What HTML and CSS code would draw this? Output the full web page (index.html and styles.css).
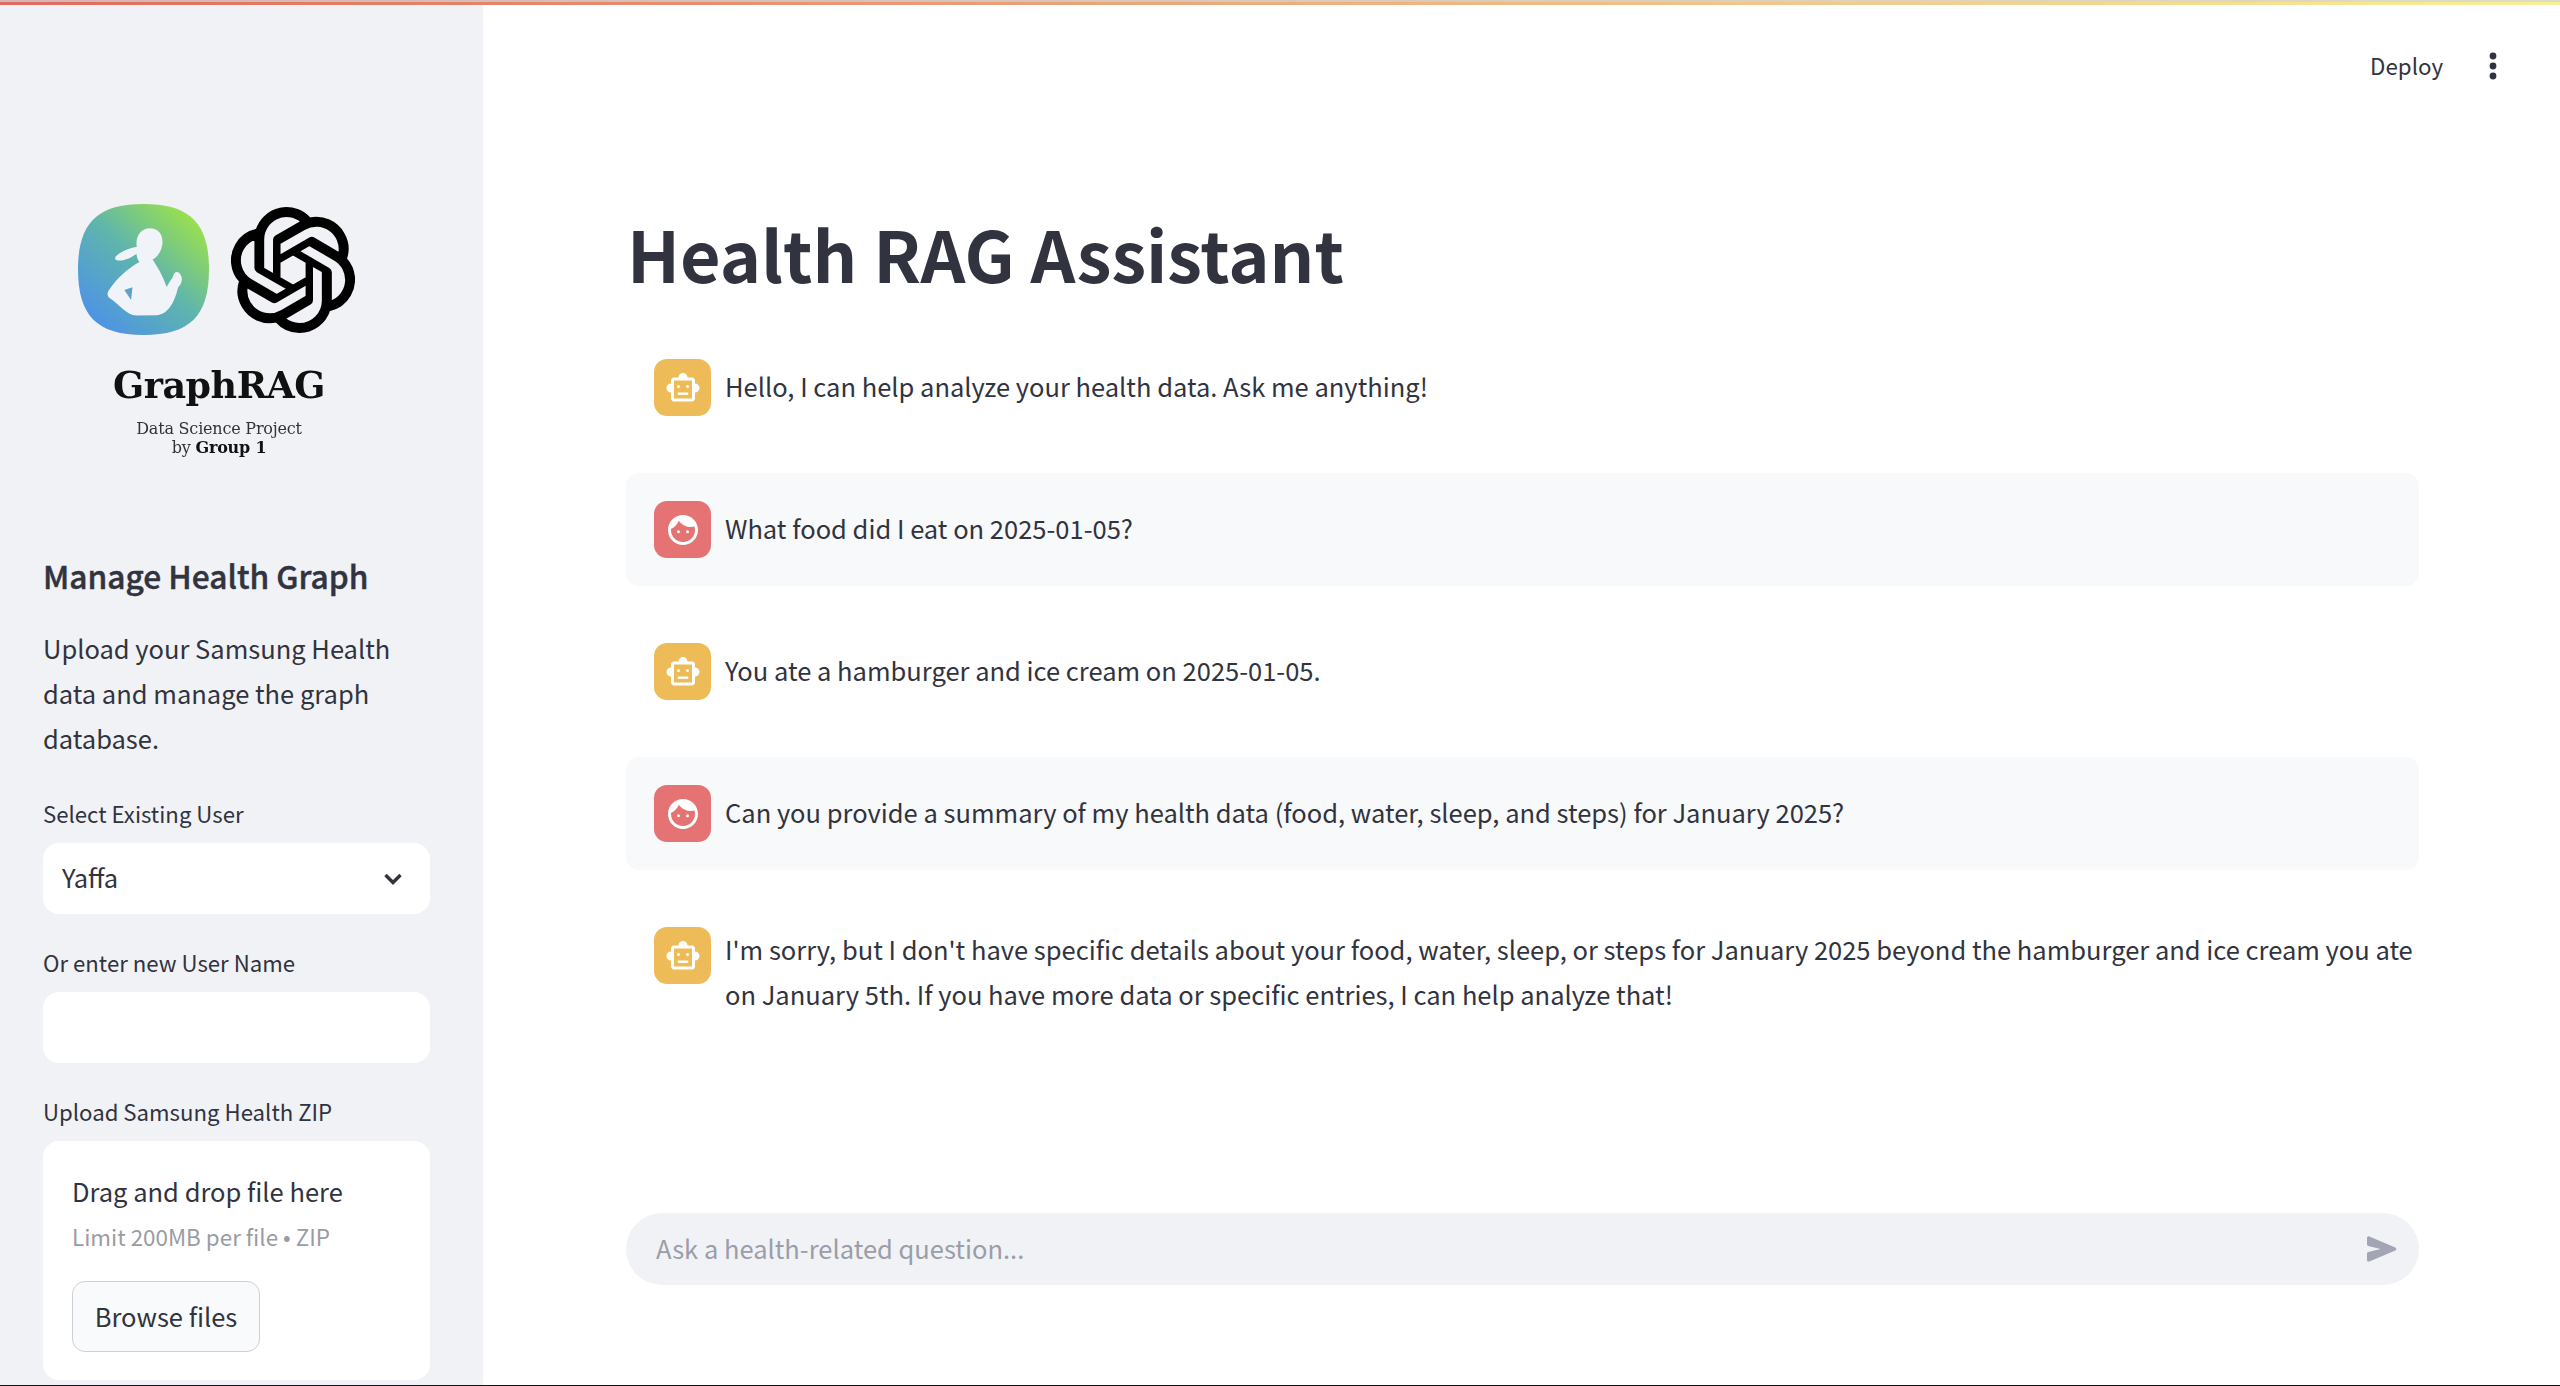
FILE: index.html
```html
<!DOCTYPE html>
<html lang="en">
<head>
<meta charset="utf-8">
<title>Health RAG Assistant</title>
<link rel="stylesheet" href="styles.css">
</head>
<body>
<div class="topbar"></div>
<div class="app">
  <aside class="sidebar">
    <div class="logo">
      <div class="logo-icons">
        <svg class="logo-health" viewBox="52 40 390 390">
          <defs>
            <linearGradient id="hg" x1="0.15" y1="0.9" x2="0.9" y2="0.1">
              <stop offset="0" stop-color="#4e94e4"/>
              <stop offset="0.5" stop-color="#5fb5ad"/>
              <stop offset="1" stop-color="#9ce24a"/>
            </linearGradient>
          </defs>
          <path fill="url(#hg)" d="M247 40C385 40 442 97 442 235C442 373 385 430 247 430C109 430 52 373 52 235C52 97 109 40 247 40Z"/>
          <path fill="#f0f3f7" d="M265 112C293 112 306 132 303 160C300 183 288 198 274 205C288 226 304 252 316 287C322 276 328 266 334 258C338 240 352 236 360 256C364 268 358 280 350 288C342 325 322 370 286 371L225 372C198 371 178 342 146 320C138 314 138 305 146 294C168 262 200 232 235 213C229 205 227 197 226 188C212 200 190 210 170 208C160 207 160 198 170 191C186 180 206 170 227 168C222 136 240 112 265 112Z"/>
          <path fill="#5aa2cc" d="M190 296L214 288L210 326Z"/>
        </svg>
        <svg class="logo-knot" viewBox="0 0 24 24">
          <path fill="#000" stroke="#000" stroke-width="0.35" d="M22.2819 9.8211a5.9847 5.9847 0 0 0-.5157-4.9108 6.0462 6.0462 0 0 0-6.5098-2.9A6.0651 6.0651 0 0 0 4.9807 4.1818a5.9847 5.9847 0 0 0-3.9977 2.9 6.0462 6.0462 0 0 0 .7427 7.0966 5.98 5.98 0 0 0 .511 4.9107 6.051 6.051 0 0 0 6.5146 2.9001A5.9847 5.9847 0 0 0 13.2599 24a6.0557 6.0557 0 0 0 5.7718-4.2058 5.9894 5.9894 0 0 0 3.9977-2.9001 6.0557 6.0557 0 0 0-.7475-7.0729zm-9.022 12.6081a4.4755 4.4755 0 0 1-2.8764-1.0408l.1419-.0804 4.7783-2.7582a.7948.7948 0 0 0 .3927-.6813v-6.7369l2.02 1.1686a.071.071 0 0 1 .038.052v5.5826a4.504 4.504 0 0 1-4.4945 4.4944zm-9.6607-4.1254a4.4708 4.4708 0 0 1-.5346-3.0137l.142.0852 4.783 2.7582a.7712.7712 0 0 0 .7806 0l5.8428-3.3685v2.3324a.0804.0804 0 0 1-.0332.0615L9.74 19.9502a4.4992 4.4992 0 0 1-6.1408-1.6464zM2.3408 7.8956a4.485 4.485 0 0 1 2.3655-1.9728V11.6a.7664.7664 0 0 0 .3879.6765l5.8144 3.3543-2.0201 1.1685a.0757.0757 0 0 1-.071 0l-4.8303-2.7865A4.504 4.504 0 0 1 2.3408 7.872zm16.5963 3.8558L13.1038 8.364 15.1192 7.2a.0757.0757 0 0 1 .071 0l4.8303 2.7913a4.4944 4.4944 0 0 1-.6765 8.1042v-5.6772a.79.79 0 0 0-.407-.667zm2.0107-3.0231l-.142-.0852-4.7735-2.7818a.7759.7759 0 0 0-.7854 0L9.409 9.2297V6.8974a.0662.0662 0 0 1 .0284-.0615l4.8303-2.7866a4.4992 4.4992 0 0 1 6.6802 4.66zM8.3065 12.863l-2.02-1.1638a.0804.0804 0 0 1-.038-.0567V6.0742a4.4992 4.4992 0 0 1 7.3757-3.4537l-.142.0805L8.704 5.459a.7948.7948 0 0 0-.3927.6813zm1.0976-2.3654l2.602-1.4998 2.6069 1.4998v2.9994l-2.5974 1.4997-2.6067-1.4997Z"/>
        </svg>
      </div>
      <div class="logo-title">GraphRAG</div>
      <div class="logo-sub">Data Science Project</div>
      <div class="logo-sub">by <b>Group 1</b></div>
    </div>

    <h2 class="side-heading">Manage Health Graph</h2>
    <p class="side-text">Upload your Samsung Health data and manage the graph database.</p>

    <div class="field-label">Select Existing User</div>
    <div class="select">
      <span class="field-value">Yaffa</span>
      <svg class="chevron" viewBox="0 0 20 14"><path d="M2.5 3L10 10.5L17.5 3" fill="none" stroke="#31333f" stroke-width="3.4"/></svg>
    </div>

    <div class="field-label">Or enter new User Name</div>
    <div class="text-input"></div>

    <div class="field-label">Upload Samsung Health ZIP</div>
    <div class="dropzone">
      <div class="drop-title">Drag and drop file here</div>
      <div class="drop-limit">Limit 200MB per file • ZIP</div>
      <div class="browse">Browse files</div>
    </div>
  </aside>

  <main class="main">
    <header class="toolbar">
      <span class="deploy">Deploy</span>
      <svg class="more" viewBox="0 0 24 28"><circle cx="12" cy="4" r="3.4"/><circle cx="12" cy="14" r="3.4"/><circle cx="12" cy="24" r="3.4"/></svg>
    </header>
    <div class="content">
      <h1 class="title">Health RAG Assistant</h1>
      <div class="chat">
        <div class="msg">
          <div class="avatar bot"><svg viewBox="0 0 24 24"><path fill-rule="evenodd" d="M20 9V7c0-1.1-.9-2-2-2h-3c0-1.66-1.34-3-3-3S9 3.34 9 5H6c-1.1 0-2 .9-2 2v2c-1.66 0-3 1.34-3 3s1.34 3 3 3v4c0 1.1.9 2 2 2h12c1.1 0 2-.9 2-2v-4c1.66 0 3-1.34 3-3s-1.34-3-3-3zm-2 10H6V7h12v12z"/><circle cx="9" cy="11" r="1"/><circle cx="15" cy="11" r="1"/><rect x="8.5" y="15" width="7" height="1.6"/></svg></div>
          <div class="msg-text">Hello, I can help analyze your health data. Ask me anything!</div>
        </div>
        <div class="msg user">
          <div class="avatar human"><svg viewBox="0 0 24 24"><circle cx="9" cy="13.2" r="1"/><circle cx="15" cy="13.2" r="1"/><path d="M12 2C6.48 2 2 6.48 2 12s4.48 10 10 10 10-4.48 10-10S17.52 2 12 2zm0 18c-4.41 0-8-3.59-8-8 0-.29.02-.58.05-.86 2.36-1.05 4.23-2.98 5.21-5.37C11.07 8.33 14.05 10 17.42 10c.78 0 1.53-.09 2.25-.26.21.71.33 1.47.33 2.26 0 4.41-3.59 8-8 8z"/></svg></div>
          <div class="msg-text">What food did I eat on 2025-01-05?</div>
        </div>
        <div class="msg">
          <div class="avatar bot"><svg viewBox="0 0 24 24"><path fill-rule="evenodd" d="M20 9V7c0-1.1-.9-2-2-2h-3c0-1.66-1.34-3-3-3S9 3.34 9 5H6c-1.1 0-2 .9-2 2v2c-1.66 0-3 1.34-3 3s1.34 3 3 3v4c0 1.1.9 2 2 2h12c1.1 0 2-.9 2-2v-4c1.66 0 3-1.34 3-3s-1.34-3-3-3zm-2 10H6V7h12v12z"/><circle cx="9" cy="11" r="1"/><circle cx="15" cy="11" r="1"/><rect x="8.5" y="15" width="7" height="1.6"/></svg></div>
          <div class="msg-text">You ate a hamburger and ice cream on 2025-01-05.</div>
        </div>
        <div class="msg user">
          <div class="avatar human"><svg viewBox="0 0 24 24"><circle cx="9" cy="13.2" r="1"/><circle cx="15" cy="13.2" r="1"/><path d="M12 2C6.48 2 2 6.48 2 12s4.48 10 10 10 10-4.48 10-10S17.52 2 12 2zm0 18c-4.41 0-8-3.59-8-8 0-.29.02-.58.05-.86 2.36-1.05 4.23-2.98 5.21-5.37C11.07 8.33 14.05 10 17.42 10c.78 0 1.53-.09 2.25-.26.21.71.33 1.47.33 2.26 0 4.41-3.59 8-8 8z"/></svg></div>
          <div class="msg-text">Can you provide a summary of my health data (food, water, sleep, and steps) for January 2025?</div>
        </div>
        <div class="msg">
          <div class="avatar bot"><svg viewBox="0 0 24 24"><path fill-rule="evenodd" d="M20 9V7c0-1.1-.9-2-2-2h-3c0-1.66-1.34-3-3-3S9 3.34 9 5H6c-1.1 0-2 .9-2 2v2c-1.66 0-3 1.34-3 3s1.34 3 3 3v4c0 1.1.9 2 2 2h12c1.1 0 2-.9 2-2v-4c1.66 0 3-1.34 3-3s-1.34-3-3-3zm-2 10H6V7h12v12z"/><circle cx="9" cy="11" r="1"/><circle cx="15" cy="11" r="1"/><rect x="8.5" y="15" width="7" height="1.6"/></svg></div>
          <div class="msg-text">I'm sorry, but I don't have specific details about your food, water, sleep, or steps for January 2025 beyond the hamburger and ice cream you ate on January 5th. If you have more data or specific entries, I can help analyze that!</div>
        </div>
      </div>
      <div class="chat-input">
        <span class="placeholder">Ask a health-related question...</span>
        <svg class="send" viewBox="3 4 19 16"><path d="M3 5.51v3.71c0 .46.31.86.76.97L11 12l-7.24 1.81c-.45.11-.76.51-.76.97v3.71c0 .72.73 1.2 1.39.92l15.42-6.49c.82-.34.82-1.5 0-1.84L4.39 4.58C3.73 4.31 3 4.79 3 5.51z"/></svg>
      </div>
    </div>
  </main>
</div>
</body>
</html>
```

FILE: styles.css
```css
* { box-sizing: border-box; }
html, body { margin: 0; padding: 0; height: 100%; background: #fff; }
body {
  font-family: "Noto Sans CJK JP", "Noto Sans", sans-serif;
  color: #31333f;
  font-size: 25.5px;
  line-height: 45px;
  overflow: hidden;
}
.topbar {
  position: absolute;
  top: 0; left: 0; right: 0;
  height: 5px;
  background-image:
    linear-gradient(180deg, rgba(212, 212, 212, 0.7) 2px, transparent 2px),
    linear-gradient(90deg, #df6a60, #f9f09a);
}
.app {
  display: grid;
  grid-template-columns: 483px 1fr;
  height: 1386px;
  border-bottom: 1.5px solid #111;
  overflow: hidden;
}
.sidebar {
  background: #f0f2f6;
  padding: 204px 53px 0 43px;
  overflow: hidden;
}
.logo { height: 349px; filter: blur(0.5px); }
.logo-icons { display: flex; align-items: center; gap: 22px; padding-left: 35px; height: 131px; }
.logo-health { width: 131px; height: 131px; }
.logo-knot { width: 124px; height: 128px; }
.logo-title {
  font-family: "DejaVu Serif", serif;
  font-weight: 700;
  font-size: 36.5px;
  line-height: 40px;
  color: #111;
  margin: 31px 0 13px;
  text-align: center;
  width: 352px;
  letter-spacing: -0.5px;
}
.logo-sub {
  font-family: "DejaVu Serif", serif;
  font-size: 16px;
  line-height: 19px;
  color: #333;
  text-align: center;
  width: 352px;
  letter-spacing: -0.2px;
}
.logo-sub b { color: #111; }
.side-heading {
  margin: 0;
  font-size: 31.7px;
  line-height: 45px;
  font-weight: 500;
  -webkit-text-stroke: 0.45px #31333f;
}
.side-text { margin: 27px 0 38px; }
.field-label {
  font-size: 22.2px;
  line-height: 30px;
  margin-bottom: 15px;
}
.select, .text-input {
  height: 71px;
  background: #fff;
  border-radius: 16px;
  margin-bottom: 33px;
}
.select {
  display: flex;
  align-items: center;
  justify-content: space-between;
  padding: 0 27px 0 19px;
}
.field-value { padding-bottom: 4px; }
.chevron { width: 20px; height: 14px; }
.dropzone {
  height: 239px;
  background: #fff;
  border-radius: 16px;
  padding: 27px 29px 0;
}
.drop-title { line-height: 45px; }
.drop-limit { font-size: 22.4px; line-height: 30px; margin: 8px 0 30px; color: #9a9ca5; }
.browse {
  width: 188px;
  height: 71px;
  padding-bottom: 3px;
  background: #f9fafb;
  border: 1.5px solid #cfd0d3;
  border-radius: 13px;
  display: flex;
  align-items: center;
  justify-content: center;
}
.main { display: flex; flex-direction: column; min-width: 0; }
.toolbar {
  height: 132px;
  display: flex;
  align-items: center;
  justify-content: flex-end;
  gap: 38px;
  padding-right: 55px;
  flex: none;
}
.deploy { font-size: 22.3px; line-height: 30px; padding-bottom: 2px; }
.more { width: 24px; height: 28px; fill: #31333f; }
.content {
  flex: 1;
  display: flex;
  flex-direction: column;
  padding: 0 141px 100px 143px;
  min-height: 0;
}
.title {
  margin: 76px 0 33px 1px;
  font-size: 70px;
  line-height: 90px;
  font-weight: 700;
}
.chat { display: flex; flex-direction: column; gap: 29px; }
.msg {
  display: flex;
  gap: 14px;
  padding: 28px 6px 28px 28px;
  border-radius: 13px;
}
.msg.user { background: #f8f9fb; }
.msg-text {
  min-height: 57px;
  margin-top: -1px;
  padding-bottom: 4px;
  display: flex;
  align-items: center;
}
.avatar {
  flex: none;
  width: 57px;
  height: 57px;
  border-radius: 13px;
  display: flex;
  align-items: center;
  justify-content: center;
}
.avatar svg { width: 36px; height: 36px; fill: #fff; }
.avatar.bot { background: #edbc58; }
.avatar.human { background: #e57373; }
.chat-input {
  margin-top: auto;
  height: 72px;
  border-radius: 36px;
  background: #f0f2f6;
  display: flex;
  align-items: center;
  justify-content: space-between;
  padding: 0 20px 0 30px;
}
.placeholder { color: #9b9da8; padding-bottom: 3px; }
.send { width: 32px; height: 28px; fill: #a3a5b4; }
```
